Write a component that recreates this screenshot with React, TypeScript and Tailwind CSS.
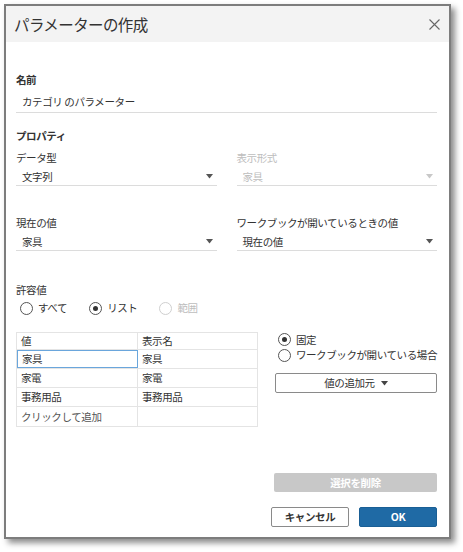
import React from "react"

const Caret = ({ color = "#555" }: { color?: string }) => (
  <svg width="7" height="5" viewBox="0 0 7 5">
    <path d="M0 0 H7 L3.5 4.5 Z" fill={color} />
  </svg>
)

const Radio = ({ checked, disabled, label }: { checked?: boolean; disabled?: boolean; label: string }) => (
  <div className={`flex items-center gap-[5px] whitespace-nowrap ${disabled ? "text-[#bdbdbd]" : "text-[#333]"}`}>
    <span
      className={`flex h-[13px] w-[13px] shrink-0 items-center justify-center rounded-full border bg-white ${
        disabled ? "border-[#cfcfcf]" : "border-[#555]"
      }`}
    >
      {checked && <span className="h-[5px] w-[5px] rounded-full bg-[#333]" />}
    </span>
    <span>{label}</span>
  </div>
)

const Select = ({ value, disabled }: { value: string; disabled?: boolean }) => (
  <div className="flex h-[20px] items-center justify-between border-b border-[#dcdcdc] pl-[6px] pr-[4px] pt-[2px]">
    <span className={disabled ? "text-[#bdbdbd]" : "text-[#333]"}>{value}</span>
    <Caret color={disabled ? "#c8c8c8" : "#555"} />
  </div>
)

const rows = [
  ["家具", "家具"],
  ["家電", "家電"],
  ["事務用品", "事務用品"],
  ["クリックして追加", ""],
]

export default function App() {
  return (
    <div className="h-[552px] w-[463px] bg-white pl-[4px] pt-[4px] font-['Noto_Sans_CJK_JP','Noto_Sans',sans-serif] text-[10.5px] leading-[16px] tracking-[-0.4px]">
      <div className="flex h-[535px] w-[447px] flex-col border-2 border-[#7d7d7d] bg-white shadow-[4px_4px_6px_rgba(0,0,0,0.45)]">
        <div className="flex h-[36px] items-center justify-between bg-[#f3f3f3] pl-[8px] pr-[8px]">
          <span className="text-[15.5px] leading-[22px] tracking-[-0.6px] text-[#333]">パラメーターの作成</span>
          <svg width="11" height="11" viewBox="0 0 11 11" className="mr-[1px]">
            <path d="M0.5 0.5 L10.5 10.5 M10.5 0.5 L0.5 10.5" stroke="#666" strokeWidth="1.1" />
          </svg>
        </div>

        <div className="flex flex-1 flex-col pl-[10px] pr-[12px]">
          <div className="mt-[30px] font-bold text-[#333]">名前</div>
          <div className="mt-[4px] flex h-[21px] items-center border-b border-[#dcdcdc] pl-[6px] text-[#333]">
            カテゴリ のパラメーター
          </div>

          <div className="mt-[15px] font-bold text-[#333]">プロパティ</div>

          <div className="grid grid-cols-2 gap-x-[20px]">
            <div>
              <div className="mt-[6px] text-[#333]">データ型</div>
              <Select value="文字列" />
              <div className="mt-[29px] text-[#333]">現在の値</div>
              <Select value="家具" />
            </div>
            <div>
              <div className="mt-[6px] text-[#bdbdbd]">表示形式</div>
              <Select value="家具" disabled />
              <div className="mt-[29px] text-[#333]">ワークブックが開いているときの値</div>
              <Select value="現在の値" />
            </div>
          </div>

          <div className="mt-[31px] text-[#333]">許容値</div>
          <div className="flex h-[20px] items-center gap-[22px] pl-[4px]">
            <Radio label="すべて" />
            <Radio label="リスト" checked />
            <Radio label="範囲" disabled />
          </div>

          <div className="mt-[14px] flex gap-[16px]">
            <div className="w-[242px] border border-[#e4e4e4] text-[#333]">
              <div className="grid h-[17px] grid-cols-[121px_1fr] border-b border-[#e4e4e4]">
                <div className="border-r border-[#e4e4e4] pl-[4px] leading-[16px]">値</div>
                <div className="pl-[4px] leading-[16px]">表示名</div>
              </div>
              {rows.map(([v, d], i) => (
                <div
                  key={i}
                  className={`grid h-[19px] grid-cols-[121px_1fr] ${i < rows.length - 1 ? "border-b border-[#e4e4e4]" : ""}`}
                >
                  <div
                    className={`flex items-center pl-[4px] ${
                      i === 0 ? "border border-[#6aa6dc]" : "border-r border-[#e4e4e4]"
                    } ${i === 3 ? "text-[#555]" : ""}`}
                  >
                    {v}
                  </div>
                  <div className="flex items-center pl-[4px]">{d}</div>
                </div>
              ))}
            </div>

            <div className="flex flex-1 flex-col pl-[1px]">
              <div className="flex h-[15px] items-center pl-[3px]">
                <Radio label="固定" checked />
              </div>
              <div className="flex h-[16px] items-center pl-[3px]">
                <Radio label="ワークブックが開いている場合" />
              </div>
              <button className="mt-[10px] flex h-[20px] items-center justify-center gap-[6px] rounded-[2px] border border-[#8a8a8a] bg-white text-[#333]">
                <span>値の追加元</span>
                <Caret color="#444" />
              </button>
            </div>
          </div>

          <div className="mt-[46px] flex justify-end">
            <div className="flex h-[19px] w-[163px] items-center justify-center rounded-[2px] bg-[#c8c8c8] font-bold text-white">
              選択を削除
            </div>
          </div>

          <div className="mt-[15px] flex justify-end gap-[10px]">
            <button className="flex h-[20px] w-[78px] items-center justify-center rounded-[2px] border border-[#8a8a8a] bg-white font-bold text-[#333]">
              キャンセル
            </button>
            <button className="flex h-[20px] w-[78px] items-center justify-center rounded-[2px] border border-[#1a5f95] bg-[#1f6aa5] font-bold text-white">
              OK
            </button>
          </div>
        </div>
      </div>
    </div>
  )
}
